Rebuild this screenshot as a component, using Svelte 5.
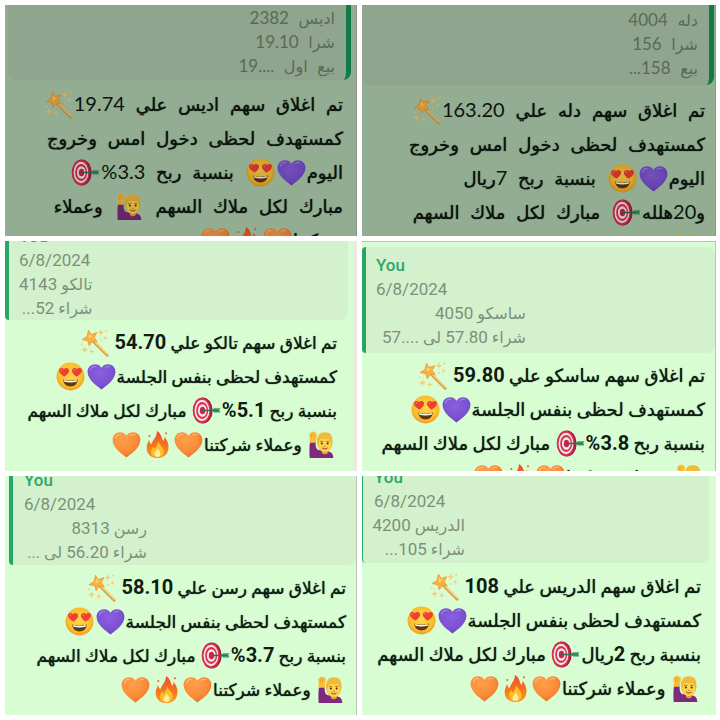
<script>
  const emojiNames = {
    '🪄': 'wand',
    '💜': 'purple-heart',
    '😍': 'heart-eyes',
    '🎯': 'target',
    '🙋‍♂️': 'raised-hand',
    '🧡': 'orange-heart',
    '🔥': 'fire'
  };

  const chats = [
    {
      id: 'adees',
      theme: 'dark',
      quote: ['اديس 2382', 'شرا 19.10', 'بيع اول ....19'],
      lines: [
        'تم اغلاق سهم اديس علي 19.74🪄',
        'كمستهدف لحظى دخول امس وخروج',
        'اليوم💜😍 بنسبة ربح 3.3%🎯',
        'مبارك لكل ملاك السهم 🙋‍♂️ وعملاء',
        'شركتنا🧡🔥🧡'
      ]
    },
    {
      id: 'dallah',
      theme: 'dark',
      quote: ['دله 4004', 'شرا 156', 'بيع 158...'],
      lines: [
        'تم اغلاق سهم دله علي 163.20🪄',
        'كمستهدف لحظى دخول امس وخروج',
        'اليوم💜😍 بنسبة ربح 7ريال',
        'و20هلله🎯 مبارك لكل ملاك السهم',
        '🙋‍♂️'
      ]
    },
    {
      id: 'talco',
      theme: 'light',
      author: 'You',
      date: '6/8/2024',
      quote: ['تالكو 4143', 'شراء 52...'],
      lines: [
        'تم اغلاق سهم تالكو علي 54.70 🪄',
        'كمستهدف لحظى بنفس الجلسة💜😍',
        'بنسبة ربح 5.1%🎯 مبارك لكل ملاك السهم',
        '🙋‍♂️ وعملاء شركتنا🧡🔥🧡'
      ]
    },
    {
      id: 'sasco',
      theme: 'light',
      author: 'You',
      date: '6/8/2024',
      quote: ['ساسكو 4050', 'شراء 57.80 لى ....57'],
      lines: [
        'تم اغلاق سهم ساسكو علي 59.80 🪄',
        'كمستهدف لحظى بنفس الجلسة💜😍',
        'بنسبة ربح 3.8%🎯 مبارك لكل ملاك السهم',
        '🙋‍♂️ وعملاء شركتنا🧡🔥🧡'
      ]
    },
    {
      id: 'rasan',
      theme: 'light',
      author: 'You',
      date: '6/8/2024',
      quote: ['رسن 8313', 'شراء 56.20 لى ...'],
      lines: [
        'تم اغلاق سهم رسن علي 58.10 🪄',
        'كمستهدف لحظى بنفس الجلسة💜😍',
        'بنسبة ربح 3.7%🎯 مبارك لكل ملاك السهم',
        '🙋‍♂️ وعملاء شركتنا🧡🔥🧡'
      ]
    },
    {
      id: 'aldrees',
      theme: 'light',
      author: 'You',
      date: '6/8/2024',
      quote: ['الدريس 4200', 'شراء 105...'],
      lines: [
        'تم اغلاق سهم الدريس علي 108 🪄',
        'كمستهدف لحظى بنفس الجلسة💜😍',
        'بنسبة ربح 2ريال🎯 مبارك لكل ملاك السهم',
        '🙋‍♂️ وعملاء شركتنا🧡🔥🧡'
      ]
    }
  ];

  // Split a line into text, numbers and emoji
  function parts(line) {
    return line
      .split(/(🙋‍♂️|🪄|💜|😍|🎯|🧡|🔥|\.*\d[\d.]*%?)/u)
      .filter((p) => p !== '')
      .map((p) => {
        if (emojiNames[p]) return { type: 'emoji', value: emojiNames[p], label: p };
        if (/^[\d.]/.test(p)) return { type: 'number', value: p };
        return { type: 'text', value: p };
      });
  }
</script>

<svg class="sprite" aria-hidden="true">
  <defs>
    <radialGradient id="g-purple" cx="0.45" cy="0.35" r="0.7">
      <stop offset="0" stop-color="#8b5fe0" />
      <stop offset="0.7" stop-color="#7a4fd0" />
      <stop offset="1" stop-color="#6539b5" />
    </radialGradient>
    <radialGradient id="g-orange" cx="0.4" cy="0.3" r="0.75">
      <stop offset="0" stop-color="#ffa04a" />
      <stop offset="0.6" stop-color="#fb8c3a" />
      <stop offset="1" stop-color="#ea6f22" />
    </radialGradient>
    <radialGradient id="g-face" cx="0.5" cy="0.45" r="0.55">
      <stop offset="0" stop-color="#ffd84a" />
      <stop offset="0.75" stop-color="#fbc02d" />
      <stop offset="1" stop-color="#f09a1e" />
    </radialGradient>
    <linearGradient id="g-fire" x1="0" y1="0" x2="0" y2="1">
      <stop offset="0" stop-color="#ee4a2c" />
      <stop offset="0.6" stop-color="#f97a1c" />
      <stop offset="1" stop-color="#fb9a1c" />
    </linearGradient>
  </defs>

  <symbol id="wand" viewBox="0 0 32 32">
    <path d="M14 14 L30 30" stroke="#d99a3c" stroke-width="3" stroke-linecap="round" />
    <path d="M14.5 13.5 L30 29" stroke="#f7cf7a" stroke-width="1.6" stroke-linecap="round" />
    <path
      d="M9.4 2.6 L12.4 7.2 L18.4 5.2 L15.6 10.6 L19 15.2 L13.2 14.8 L10.2 19.6 L8.6 14 L2.4 12.8 L7.8 9.4 Z"
      fill="#f8b244" stroke="#ee9c34" stroke-width="1" stroke-linejoin="round" />
    <path d="M10 6 L12 8.6 L14.6 8 L12 10.6 L9.4 11 Z" fill="#ffd274" />
    <g fill="#f9cc74">
      <path d="M23 1 L24 4 L27 5 L24 6 L23 9 L22 6 L19 5 L22 4 Z" />
      <path d="M28 8 L28.7 10.3 L31 11 L28.7 11.7 L28 14 L27.3 11.7 L25 11 L27.3 10.3 Z" />
      <path d="M5 20 L6 23 L9 24 L6 25 L5 28 L4 25 L1 24 L4 23 Z" />
      <path d="M13 23 L13.8 25.2 L16 26 L13.8 26.8 L13 29 L12.2 26.8 L10 26 L12.2 25.2 Z" />
      <circle cx="23" cy="13" r="1" />
      <circle cx="29" cy="3" r="1" />
      <circle cx="2" cy="18" r="1" />
    </g>
  </symbol>

  <symbol id="purple-heart" viewBox="0 0 32 32">
    <path
      d="M16 30.4 C13.5 28 0.6 20.6 0.6 10.8 C0.6 5.6 4.4 2.4 8.8 2.4 C12.2 2.4 15 4 16 6.4 C17 4 19.8 2.4 23.2 2.4 C27.6 2.4 31.4 5.6 31.4 10.8 C31.4 20.6 18.5 28 16 30.4 Z"
      fill="url(#g-purple)" />
    <path d="M4 9 C4.6 6 7 4.6 9.6 5" fill="none" stroke="#a080ea" stroke-width="1.4" stroke-linecap="round" />
    <path d="M20 6 C21.6 4.8 23.6 4.6 25.2 5.2" fill="none" stroke="#a080ea" stroke-width="1.2" stroke-linecap="round" />
  </symbol>

  <symbol id="orange-heart" viewBox="0 0 32 32">
    <path
      d="M16 30.4 C13.5 28 0.6 20.6 0.6 10.8 C0.6 5.6 4.4 2.4 8.8 2.4 C12.2 2.4 15 4 16 6.4 C17 4 19.8 2.4 23.2 2.4 C27.6 2.4 31.4 5.6 31.4 10.8 C31.4 20.6 18.5 28 16 30.4 Z"
      fill="url(#g-orange)" />
    <path d="M4 9 C4.6 6 7 4.6 9.6 5" fill="none" stroke="#ffb870" stroke-width="1.4" stroke-linecap="round" />
    <path d="M20 6 C21.6 4.8 23.6 4.6 25.2 5.2" fill="none" stroke="#ffb870" stroke-width="1.2" stroke-linecap="round" />
  </symbol>

  <symbol id="heart-eyes" viewBox="0 0 32 32">
    <circle cx="16" cy="16" r="15.4" fill="url(#g-face)" />
    <path d="M8 19.4 C12.4 21 19.6 21 24 19.4 C23.6 24.6 20.4 27 16 27 C11.6 27 8.4 24.6 8 19.4 Z" fill="#5f3714" />
    <path d="M8.8 19.8 C13 21.2 19 21.2 23.2 19.8 L22.8 21.8 C18.6 23 13.4 23 9.2 21.8 Z" fill="#fff" />
    <path
      d="M9.6 16 C7.4 15 3.2 12.4 3.4 9 C3.6 6.2 7.2 5.6 8.8 8 C10.4 5.6 14.4 6.2 14.4 9.4 C14.4 12.4 11.4 14.8 9.6 16 Z"
      fill="#ee3f34" />
    <path
      d="M22.4 16 C24.6 15 28.8 12.4 28.6 9 C28.4 6.2 24.8 5.6 23.2 8 C21.6 5.6 17.6 6.2 17.6 9.4 C17.6 12.4 20.6 14.8 22.4 16 Z"
      fill="#ee3f34" />
    <circle cx="6" cy="8.8" r="0.9" fill="#ff8a80" />
    <circle cx="20" cy="8.8" r="0.9" fill="#ff8a80" />
  </symbol>

  <symbol id="target" viewBox="0 0 32 32">
    <ellipse cx="12" cy="16" rx="10.8" ry="14.4" fill="#a31c3c" />
    <ellipse cx="10.8" cy="16" rx="10" ry="14.2" fill="#d4304f" />
    <ellipse cx="11" cy="16" rx="8.2" ry="11.8" fill="#f9e6e9" />
    <ellipse cx="11.2" cy="16" rx="6.6" ry="9.4" fill="#d4304f" />
    <ellipse cx="11.4" cy="16" rx="4.9" ry="7" fill="#f9e6e9" />
    <ellipse cx="11.6" cy="16" rx="3" ry="4.2" fill="#cb2548" />
    <path d="M12 16 H24" stroke="#2c6b58" stroke-width="1.8" stroke-linecap="round" />
    <path d="M21.6 15.6 L24.4 13.6 H31.4 L30 15.8 L31.4 18.2 H24.4 Z" fill="#3d9a68" />
    <path d="M22 16 H30" stroke="#256b48" stroke-width="0.8" />
  </symbol>

  <symbol id="raised-hand" viewBox="0 0 32 32">
    <path d="M3 31 C2.4 24 2.6 18 3.4 13 L9.6 13 C9.2 17 9.6 20 12 22 L24 23.6 C28 24.6 29 27.6 29 31 Z" fill="#7d2a7d" />
    <path d="M3 14 L2.6 4.4 C2.8 2.6 4 2.8 4.4 3.8 C4.6 1.2 6.4 1 6.8 3 C7.6 1 9.4 1.4 9.2 3.6 C10.6 2.8 11.4 4.4 10.8 6 L9.8 14 Z" fill="#f9bf3c" />
    <path d="M5 4 V8 M7 3.4 V8" stroke="#dc9424" stroke-width="0.6" />
    <path d="M16.4 21 H23 V25 C21.4 27.4 18 27.4 16.4 25 Z" fill="#e6a02c" />
    <ellipse cx="19.6" cy="14" rx="8.4" ry="10.4" fill="#e8aa30" />
    <ellipse cx="19.6" cy="15.6" rx="7.2" ry="8.6" fill="#ffd34f" />
    <path d="M11.4 14 C10.6 6 14 2.6 20 2.6 C26 2.6 29 7 27.8 14 C26.6 12.6 26.4 11 25.6 9.6 C21.6 10.6 16.8 10.4 14 9 C13 10.6 12.6 12.6 11.4 14 Z" fill="#eebb3c" />
    <path d="M14.8 12.6 H17.6 M21.6 12.6 H24.4" stroke="#9a6a1c" stroke-width="0.9" stroke-linecap="round" />
    <circle cx="16.4" cy="15" r="1.1" fill="#3c2a1c" />
    <circle cx="22.8" cy="15" r="1.1" fill="#3c2a1c" />
    <path d="M18.8 18 H20.6" stroke="#c98a22" stroke-width="1" stroke-linecap="round" />
    <path d="M17 20 C18.6 21.4 20.8 21.4 22.4 20" fill="none" stroke="#8a3a1c" stroke-width="1.1" stroke-linecap="round" />
  </symbol>

  <symbol id="fire" viewBox="0 0 32 32">
    <path
      d="M15.4 1 C20.6 4 20.4 9 22.4 12 C23.6 11 23.8 9 23.4 7.4 C27 11 28.8 16 28 21 C27 27.6 22 31 16 31 C9.6 31 4.4 27 4 20.6 C3.8 16.6 5.6 13.6 7 11 C7.2 13.4 7.8 14.8 9.2 15.6 C10.6 11 15.6 7.4 15.4 1 Z"
      fill="url(#g-fire)" />
    <path
      d="M16.6 11.4 C17.2 16 22.6 18 22.8 23.4 C23 27.8 19.6 30 16 30 C12 30 8.8 27.6 9 23.4 C9.2 20.8 10.4 19.2 11.2 18 C11.6 19.4 12 20.2 13 20.6 C14.6 18 17 15.6 16.6 11.4 Z"
      fill="#fdc02c" />
    <path d="M16.2 20 C17 22.6 19.4 23.6 19.2 26.4 C19 28.8 17.6 29.6 16 29.6 C14 29.6 12.6 28.4 12.8 26 C13 23.8 15.8 22.8 16.2 20 Z" fill="#fff0a8" />
    <circle cx="7" cy="6.6" r="1.1" fill="#f05a2c" />
    <circle cx="25.4" cy="3.6" r="1.1" fill="#f05a2c" />
  </symbol>
</svg>

<main class="collage">
  {#each chats as chat (chat.id)}
    <article class="chat {chat.theme} {chat.id}">
      <blockquote class="quote">
        <div class="quote-body">
          {#if chat.author}
            <div class="author">{chat.author}</div>
            <div class="date">{chat.date}</div>
          {/if}
          {#each chat.quote as line}
            <div class="quote-line" dir="rtl">{#each parts(line) as part}<span class={part.type}>{part.value}</span>{/each}</div>
          {/each}
        </div>
      </blockquote>
      <div class="message" dir="rtl">
        {#each chat.lines as line}
          <p>{#each parts(line) as part}{#if part.type === 'emoji'}<svg class="emoji" role="img" aria-label={part.label}><use href="#{part.value}" /></svg>{:else}<span class={part.type}>{part.value}</span>{/if}{/each}</p>
        {/each}
      </div>
    </article>
  {/each}
</main>

<style>
  :global(body) {
    margin: 0;
    background: #fff;
  }

  .sprite {
    position: absolute;
    width: 0;
    height: 0;
  }

  .collage {
    box-sizing: border-box;
    height: 100vh;
    display: grid;
    grid-template-columns: 352fr 354fr;
    grid-template-rows: 231fr 230fr 239fr;
    gap: 5px;
    padding: 5px 4px 5px 5px;
  }

  .chat {
    min-width: 0;
    min-height: 0;
    overflow: hidden;
    box-sizing: border-box;
    font-family: Roboto, 'DejaVu Sans', sans-serif;
    color: #101c14;
    background: #d8fdd2;
  }

  .quote {
    margin: 0;
    display: flex;
    background: #d4f1ce;
    border-left: 4px solid #27a765;
    border-radius: 4px 8px 8px 4px;
    font-size: 17px;
    line-height: 24px;
    color: #7c9079;
  }

  .quote-line {
    height: 24px;
    white-space: nowrap;
  }

  .quote-line .text {
    font-size: 16px;
  }

  .author {
    font-weight: 500;
    color: #2fa56b;
  }

  .message p {
    margin: 0;
    height: 34px;
    line-height: 34px;
    font-size: 18px;
    white-space: nowrap;
  }

  /* Keeps every baseline on the line's own strut */
  .text,
  .number {
    line-height: 0;
  }

  /* No medium weight for the Arabic glyphs, so thicken them a little */
  .message .text {
    text-shadow: 0 0 1px currentColor;
  }

  .message .number {
    font-size: 20px;
    font-weight: 700;
  }

  .emoji {
    width: 29px;
    height: 29px;
    margin: 0 1px;
    vertical-align: -8px;
  }

  /* Dimmed chats */
  .dark {
    font-family: 'Liberation Mono', 'DejaVu Sans', monospace;
    color: #0c140e;
    background: #93ad92;
    border-right: 1px solid #94908f;
  }

  .dark .quote {
    justify-content: flex-end;
    background: #90a58e;
    border-left: 0;
    border-right: 5px solid #117a45;
    border-radius: 0 0 8px 8px;
    color: #596a55;
  }

  .dark .number {
    font-family: Lato, sans-serif;
    font-weight: 400;
  }

  .dark .emoji {
    filter: brightness(0.84);
  }

  /* Crop and inset of each chat */
  .adees .quote {
    margin: 0 5px 0 3px;
    padding: 3px 11px 0 0;
  }

  .adees .message {
    padding: 9px 13px 0 0;
  }

  .dallah .quote {
    margin-right: 1px;
    padding: 5px 11px 3px 0;
  }

  .dallah .message {
    padding: 10px 10px 0 0;
  }

  .talco {
    border-right: 4px solid #efe8e0;
  }

  .talco .quote {
    margin: -17px 5px 0 0;
    padding: 0 0 0 10px;
  }

  .talco .message {
    padding: 6px 16px 0 0;
  }

  .talco .message .text,
  .rasan .message .text {
    font-size: 17px;
  }

  .sasco {
    border-top: 1px solid #b9c4b6;
    border-right: 1px solid #b9c4b6;
  }

  .sasco .quote {
    margin-top: 5px;
    padding: 6px 0 4px 10px;
  }

  .sasco .quote-body {
    width: 150px;
  }

  .sasco .message {
    padding: 6px 10px 0 0;
  }

  .rasan {
    border-right: 1px solid #b9c4b6;
  }

  .rasan .quote {
    margin: -8px 0 0 4px;
    padding: 0 0 1px 11px;
  }

  .rasan .quote-body {
    width: 123px;
  }

  .rasan .message {
    padding: 6px 10px 0 0;
  }

  .aldrees .quote {
    margin: -11px 7px 0 0;
    padding: 0 0 2px 11px;
    border-left-width: 1px;
  }

  .aldrees .quote-body {
    width: 91px;
  }

  .aldrees .message {
    padding: 7px 15px 0 0;
  }
</style>
